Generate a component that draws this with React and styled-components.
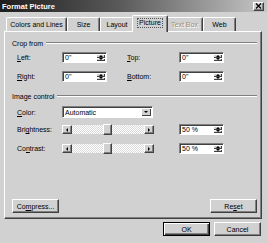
import React from "react";
import styled, { createGlobalStyle, css } from "styled-components";

const GlobalStyle = createGlobalStyle`
  html, body { margin: 0; padding: 0; background: #d1d1d1; }
  body {
    font-family: "Liberation Sans", Arial, sans-serif;
    font-size: 7px;
    color: #000;
  }
`;

const raised = css`
  border: 1px solid;
  border-color: #fff #404040 #404040 #fff;
  box-shadow: inset -1px -1px 0 #808080;
`;

const sunken = css`
  border: 1px solid;
  border-color: #808080 #fff #fff #808080;
  box-shadow: inset 1px 1px 0 #404040;
`;

const Window = styled.div`
  width: 267px;
  height: 243px;
  box-sizing: border-box;
  display: flex;
  flex-direction: column;
  background: #d1d1d1;
  overflow: hidden;
`;

const TitleBar = styled.div`
  height: 12px;
  display: flex;
  align-items: center;
  justify-content: space-between;
  padding: 0 3px 0 2px;
  background: linear-gradient(to right, #1e1e1e, #5a5a5a 45%, #c6c6c6);
`;

const Title = styled.span`
  color: #fff;
  font-weight: bold;
  font-size: 7.5px;
`;

const CloseBox = styled.div`
  width: 11px;
  height: 9px;
  box-sizing: border-box;
  background: #d1d1d1;
  ${raised};
  display: flex;
  align-items: center;
  justify-content: center;
`;

const Body = styled.div`
  flex: 1;
  display: flex;
  flex-direction: column;
  padding: 3px 5px 0 4px;
`;

const TabStrip = styled.div`
  display: flex;
  align-items: flex-end;
  height: 16px;
  padding-left: 2px;
`;

const Tab = styled.div`
  width: ${(p) => p.$w}px;
  height: 14px;
  box-sizing: border-box;
  border-top: 1px solid #fff;
  border-left: 1px solid #fff;
  border-right: 1px solid #404040;
  box-shadow: inset -1px 0 0 #808080;
  border-radius: 2px 2px 0 0;
  display: flex;
  align-items: center;
  justify-content: center;
  background: #d1d1d1;
  color: ${(p) => (p.$disabled ? "#909090" : "#000")};
  text-shadow: ${(p) => (p.$disabled ? "1px 1px 0 #fff" : "none")};
  ${(p) =>
    p.$active &&
    css`
      height: 17px;
      margin: 0 -2px -1px -2px;
      position: relative;
      z-index: 1;
      padding-bottom: 2px;
    `}
`;

const Focus = styled.span`
  border: 1px dotted #555;
  padding: 0 1px;
  line-height: 8px;
`;

const Panel = styled.div`
  height: 188px;
  box-sizing: border-box;
  ${raised};
  display: flex;
  flex-direction: column;
  padding: 0 4px 0 7px;
`;

const GroupHeader = styled.div`
  display: flex;
  align-items: center;
  gap: 3px;
  height: 10px;
  margin-top: ${(p) => p.$top}px;
  &::after {
    content: "";
    flex: 1;
    border-top: 1px solid #808080;
    border-bottom: 1px solid #fff;
  }
`;

const CropGrid = styled.div`
  display: grid;
  grid-template-columns: 45px 45px 20px 52px 45px;
  row-gap: 8px;
  margin: 4px 0 0 5px;
  align-items: center;
`;

const ControlGrid = styled.div`
  display: grid;
  grid-template-columns: 45px 92px 25px 45px;
  align-items: center;
  margin: ${(p) => p.$top}px 0 0 5px;
`;

const Label = styled.span`
  grid-column: ${(p) => p.$col || "auto"};
`;

const Field = styled.div`
  width: 45px;
  height: ${(p) => p.$h || 11}px;
  box-sizing: border-box;
  background: #fff;
  ${sunken};
  display: flex;
  align-items: center;
  grid-column: ${(p) => p.$col || "auto"};
`;

const FieldText = styled.span`
  flex: 1;
  padding-left: 2px;
  line-height: 1;
`;

const Spinner = styled.div`
  width: 9px;
  align-self: stretch;
  display: flex;
  flex-direction: column;
  margin: 1px 1px 1px 0;
`;

const SpinHalf = styled.div`
  flex: 1;
  background: #d1d1d1;
  box-shadow: inset 1px 1px 0 #fff, inset -1px -1px 0 #404040;
  display: flex;
  align-items: center;
  justify-content: center;
`;

const Arrow = styled.span`
  width: 0;
  height: 0;
  border: 2px solid transparent;
  ${(p) =>
    p.$dir === "up" &&
    css`
      border-bottom-color: #000;
      border-top-width: 0;
    `}
  ${(p) =>
    p.$dir === "down" &&
    css`
      border-top-color: #000;
      border-bottom-width: 0;
    `}
  ${(p) =>
    p.$dir === "left" &&
    css`
      border-right-color: #000;
      border-left-width: 0;
    `}
  ${(p) =>
    p.$dir === "right" &&
    css`
      border-left-color: #000;
      border-right-width: 0;
    `}
`;

const Dropdown = styled.div`
  grid-column: 2 / span 1;
  width: 91px;
  height: 12px;
  box-sizing: border-box;
  background: #fff;
  ${sunken};
  display: flex;
  align-items: center;
`;

const DropButton = styled.div`
  width: 10px;
  align-self: stretch;
  margin: 1px 1px 1px 0;
  background: #d1d1d1;
  box-shadow: inset 1px 1px 0 #fff, inset -1px -1px 0 #404040;
  display: flex;
  align-items: center;
  justify-content: center;
`;

const ScrollBar = styled.div`
  width: 92px;
  height: 9px;
  display: flex;
  align-items: stretch;
  background: repeating-conic-gradient(#fff 0 25%, #dadada 0 50%) 0 0 / 2px 2px;
`;

const ScrollBtn = styled.div`
  width: 10px;
  background: #d1d1d1;
  ${raised};
  box-sizing: border-box;
  display: flex;
  align-items: center;
  justify-content: center;
`;

const Track = styled.div`
  flex: 1;
  display: flex;
  align-items: stretch;
`;

const Thumb = styled.div`
  width: 9px;
  box-sizing: border-box;
  background: #d1d1d1;
  ${raised};
  margin-left: ${(p) => p.$pos}px;
  margin-top: -1px;
  margin-bottom: -1px;
`;

const PanelButtons = styled.div`
  margin-top: auto;
  margin-bottom: 5px;
  display: flex;
  justify-content: space-between;
`;

const Button = styled.div`
  width: 47px;
  height: 14px;
  box-sizing: border-box;
  background: #d1d1d1;
  ${raised};
  display: flex;
  align-items: center;
  justify-content: center;
  ${(p) =>
    p.$default &&
    css`
      border-color: #000;
      box-shadow: inset 1px 1px 0 #fff, inset -1px -1px 0 #404040,
        inset -2px -2px 0 #808080;
    `}
`;

const Footer = styled.div`
  display: flex;
  justify-content: flex-end;
  gap: 4px;
  margin-top: 3px;
  padding-right: 1px;
`;

const SpinField = ({ value, h, col }) => (
  <Field $h={h} $col={col}>
    <FieldText>{value}</FieldText>
    <Spinner>
      <SpinHalf>
        <Arrow $dir="up" />
      </SpinHalf>
      <SpinHalf>
        <Arrow $dir="down" />
      </SpinHalf>
    </Spinner>
  </Field>
);

const Slider = ({ pos }) => (
  <ScrollBar>
    <ScrollBtn>
      <Arrow $dir="left" />
    </ScrollBtn>
    <Track>
      <Thumb $pos={pos} />
    </Track>
    <ScrollBtn>
      <Arrow $dir="right" />
    </ScrollBtn>
  </ScrollBar>
);

const tabs = [
  { label: "Colors and Lines", w: 61 },
  { label: "Size", w: 33 },
  { label: "Layout", w: 34 },
  { label: "Picture", w: 36, active: true },
  { label: "Text Box", w: 37, disabled: true },
  { label: "Web", w: 33 },
];

export default function App() {
  return (
    <Window>
      <GlobalStyle />
      <TitleBar>
        <Title>Format Picture</Title>
        <CloseBox>
          <svg width="7" height="6" viewBox="0 0 7 6">
            <path d="M1 0.5L6 5.5M6 0.5L1 5.5" stroke="#000" strokeWidth="1.3" />
          </svg>
        </CloseBox>
      </TitleBar>
      <Body>
        <TabStrip>
          {tabs.map((t) => (
            <Tab key={t.label} $w={t.w} $active={t.active} $disabled={t.disabled}>
              {t.active ? <Focus>{t.label}</Focus> : t.label}
            </Tab>
          ))}
        </TabStrip>
        <Panel>
          <GroupHeader $top={6}>Crop from</GroupHeader>
          <CropGrid>
            <Label>
              <u>L</u>eft:
            </Label>
            <SpinField value={'0"'} />
            <Label $col={4}>
              <u>T</u>op:
            </Label>
            <SpinField value={'0"'} />
            <Label>
              <u>R</u>ight:
            </Label>
            <SpinField value={'0"'} />
            <Label $col={4}>
              <u>B</u>ottom:
            </Label>
            <SpinField value={'0"'} />
          </CropGrid>
          <GroupHeader $top={9}>Image control</GroupHeader>
          <ControlGrid $top={5}>
            <Label>
              <u>C</u>olor:
            </Label>
            <Dropdown>
              <FieldText>Automatic</FieldText>
              <DropButton>
                <Arrow $dir="down" />
              </DropButton>
            </Dropdown>
          </ControlGrid>
          <ControlGrid $top={6}>
            <Label>
              Bri<u>g</u>htness:
            </Label>
            <Slider pos={31} />
            <SpinField value="50 %" col={4} />
          </ControlGrid>
          <ControlGrid $top={8}>
            <Label>
              Co<u>n</u>trast:
            </Label>
            <Slider pos={31} />
            <SpinField value="50 %" col={4} />
          </ControlGrid>
          <PanelButtons>
            <Button>
              Co<u>m</u>press...
            </Button>
            <Button>
              Re<u>s</u>et
            </Button>
          </PanelButtons>
        </Panel>
        <Footer>
          <Button $default>OK</Button>
          <Button>Cancel</Button>
        </Footer>
      </Body>
    </Window>
  );
}
